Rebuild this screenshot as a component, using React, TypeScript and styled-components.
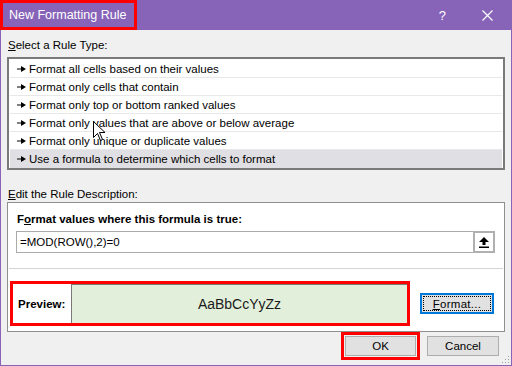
import styled, { createGlobalStyle } from "styled-components";

const GlobalStyle = createGlobalStyle`
  html, body {
    margin: 0;
    padding: 0;
    background: #ffffff;
  }
  body {
    font-family: "Liberation Sans", Arial, sans-serif;
    font-size: 11.5px;
    color: #000;
  }
`;

const Dialog = styled.div`
  position: relative;
  width: 512px;
  height: 366px;
  box-sizing: border-box;
  background: #f0f0f0;
  border: 1px solid #8764b8;
  border-top: none;
  display: flex;
  flex-direction: column;
`;

const TitleBar = styled.div`
  height: 30px;
  margin: 0 -1px;
  background: #8764b8;
  display: flex;
  align-items: stretch;
  color: #fff;
`;

const TitleText = styled.span`
  box-sizing: border-box;
  width: 137px;
  height: 30px;
  border: 3px solid #ff0000;
  padding-left: 6px;
  display: flex;
  align-items: center;
  font-size: 12.5px;
`;

const TitleButtons = styled.div`
  margin-left: auto;
  display: flex;
  align-items: center;
  gap: 36px;
  padding-right: 19px;
`;

const Help = styled.span`
  font-size: 13px;
  color: #fff;
`;

const Body = styled.div`
  flex: 1;
  display: flex;
  flex-direction: column;
  padding: 0 6px 0 6px;
`;

const Label = styled.div<{ $top: number }>`
  margin-top: ${(p) => p.$top}px;
  padding-left: 1px;
  height: 16px;
  line-height: 16px;
`;

const ListBox = styled.div`
  margin-top: 4px;
  box-sizing: border-box;
  height: 113px;
  border: 2px solid #7a7a7a;
  background: #fff;
  padding: 1px 1px 0 1px;
  position: relative;
`;

const Row = styled.div<{ $selected: boolean }>`
  height: 18px;
  box-sizing: border-box;
  border-bottom: 1px solid ${(p) => (p.$selected ? "transparent" : "#e8e8e8")};
  background: ${(p) => (p.$selected ? "#e0dfe3" : "transparent")};
  display: flex;
  align-items: center;
  padding-left: 7px;
  gap: 2px;
  white-space: nowrap;
`;

const Cursor = styled.svg`
  position: absolute;
  left: 84px;
  top: 62px;
`;

const Panel = styled.div`
  box-sizing: border-box;
  height: 130px;
  background: #fff;
  border: 1px solid #8f8f8f;
  display: flex;
  flex-direction: column;
`;

const BoldLabel = styled.div`
  font-weight: bold;
  margin: 8px 0 0 9px;
  height: 16px;
  line-height: 16px;
`;

const FormulaRow = styled.div`
  display: flex;
  margin: 4px 9px 0 8px;
  height: 22px;
`;

const FormulaInput = styled.div`
  flex: 1;
  box-sizing: border-box;
  border: 1px solid #ababab;
  border-right: none;
  display: flex;
  align-items: center;
  padding-left: 3px;
`;

const RefButton = styled.div`
  width: 22px;
  box-sizing: border-box;
  border: 2px solid #b0b0b0;
  background: #fff;
  display: flex;
  align-items: center;
  justify-content: center;
`;

const Divider = styled.div`
  margin: 15px 1px 0 1px;
  height: 1px;
  background: #d4d4d4;
`;

const PreviewRow = styled.div`
  display: flex;
  align-items: center;
  margin-top: 12px;
  padding-right: 10px;
`;

const PreviewFrame = styled.div`
  box-sizing: border-box;
  width: 400px;
  height: 45px;
  margin-left: 2px;
  border: 3px solid #ff0000;
  display: flex;
  align-items: center;
`;

const PreviewLabel = styled.div`
  font-weight: bold;
  width: 58px;
  padding-left: 5px;
  box-sizing: border-box;
`;

const Sample = styled.div`
  flex: 1;
  align-self: stretch;
  background: #e2efda;
  border-left: 1px solid #7a7a7a;
  border-top: 1px solid #7a7a7a;
  display: flex;
  align-items: center;
  justify-content: center;
  font-size: 14px;
  color: #1a1a1a;
`;

const Button = styled.div<{ $width: number }>`
  box-sizing: border-box;
  width: ${(p) => p.$width}px;
  height: 20px;
  background: #e1e1e1;
  border: 1px solid #adadad;
  display: flex;
  align-items: center;
  justify-content: center;
`;

const FocusButton = styled(Button)`
  margin-left: auto;
  height: 21px;
  border: 2px solid #0078d7;
  padding: 1px;
  span {
    flex: 1;
    align-self: stretch;
    display: flex;
    align-items: center;
    justify-content: center;
    border: 1px dotted #000;
    letter-spacing: 0.3px;
  }
`;

const Footer = styled.div`
  display: flex;
  justify-content: flex-end;
  align-items: center;
  gap: 7px;
  padding-right: 6px;
`;

const Highlight = styled.div`
  box-sizing: border-box;
  border: 3px solid #ff0000;
  padding: 1px;
`;

const Grip = styled.svg`
  position: absolute;
  right: 1px;
  bottom: 1px;
`;

const rules = [
  "Format all cells based on their values",
  "Format only cells that contain",
  "Format only top or bottom ranked values",
  "Format only values that are above or below average",
  "Format only unique or duplicate values",
  "Use a formula to determine which cells to format",
];

function Bullet() {
  return (
    <svg width="10" height="8" viewBox="0 0 10 8">
      <rect x="0" y="3.5" width="5" height="1" fill="#000" />
      <polygon points="4,1 9,4 4,7" fill="#000" />
    </svg>
  );
}

export default function App() {
  return (
    <>
      <GlobalStyle />
      <Dialog>
        <TitleBar>
          <TitleText>New Formatting Rule</TitleText>
          <TitleButtons>
            <Help>?</Help>
            <svg width="11" height="11" viewBox="0 0 11 11">
              <path d="M0.5 0.5 L10.5 10.5 M10.5 0.5 L0.5 10.5" stroke="#fff" strokeWidth="1.2" />
            </svg>
          </TitleButtons>
        </TitleBar>
        <Body>
          <Label $top={7}>
            <u>S</u>elect a Rule Type:
          </Label>
          <ListBox>
            {rules.map((r, i) => (
              <Row key={r} $selected={i === rules.length - 1}>
                <Bullet />
                {r}
              </Row>
            ))}
            <Cursor width="13" height="21" viewBox="0 0 13 21">
              <path
                d="M0.5 0.5 L0.5 16.5 L4.5 12.5 L7.5 19.5 L9.5 18.5 L6.5 11.5 L12 11.5 Z"
                fill="#fff"
                stroke="#000"
                strokeWidth="1"
              />
            </Cursor>
          </ListBox>
          <Label $top={16}>
            <u>E</u>dit the Rule Description:
          </Label>
          <Panel>
            <BoldLabel>
              F<u>o</u>rmat values where this formula is true:
            </BoldLabel>
            <FormulaRow>
              <FormulaInput>=MOD(ROW(),2)=0</FormulaInput>
              <RefButton>
                <svg width="10" height="11" viewBox="0 0 10 11">
                  <polygon points="5,0 10,5 6.5,5 6.5,8 3.5,8 3.5,5 0,5" fill="#000" />
                  <rect x="0" y="9.5" width="10" height="1.5" fill="#000" />
                </svg>
              </RefButton>
            </FormulaRow>
            <Divider />
            <PreviewRow>
              <PreviewFrame>
                <PreviewLabel>Preview:</PreviewLabel>
                <Sample>AaBbCcYyZz</Sample>
              </PreviewFrame>
              <FocusButton $width={74}>
                <span>
                  <u>F</u>ormat...
                </span>
              </FocusButton>
            </PreviewRow>
          </Panel>
          <Footer>
            <Highlight>
              <Button $width={71}>OK</Button>
            </Highlight>
            <Button $width={72}>Cancel</Button>
          </Footer>
        </Body>
        <Grip width="10" height="10" viewBox="0 0 10 10">
          {[
            [8, 2],
            [5, 5],
            [8, 5],
            [2, 8],
            [5, 8],
            [8, 8],
          ].map(([x, y]) => (
            <rect key={`${x}-${y}`} x={x} y={y} width="1" height="1" fill="#a0a0a0" />
          ))}
        </Grip>
      </Dialog>
    </>
  );
}
